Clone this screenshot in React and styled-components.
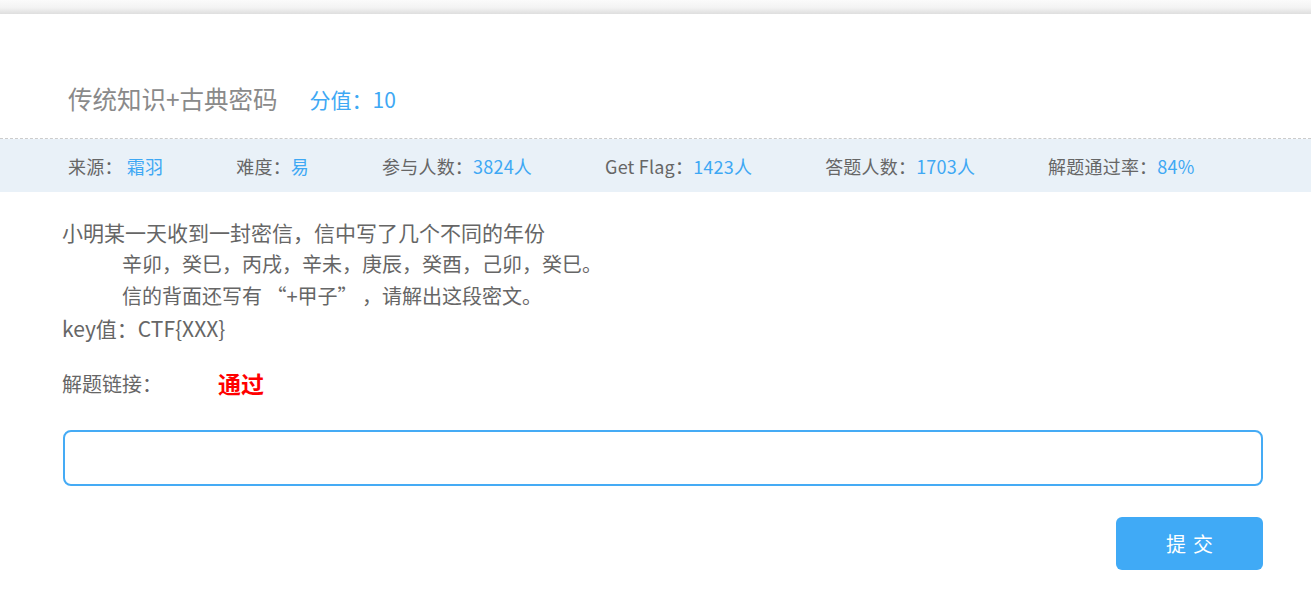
import React from "react";
import styled, { createGlobalStyle } from "styled-components";

const GlobalStyle = createGlobalStyle`
  html, body {
    margin: 0;
    padding: 0;
    background: #ffffff;
  }
  body {
    font-family: "Noto Sans CJK SC", "Noto Sans", sans-serif;
    color: #666666;
  }
`;

const stats = [
  { label: "来源：", value: "霜羽", space: true },
  { label: "难度：", value: "易" },
  { label: "参与人数：", value: "3824人" },
  { label: "Get Flag：", value: "1423人" },
  { label: "答题人数：", value: "1703人" },
  { label: "解题通过率：", value: "84%" },
];

const App = () => {
  return (
    <>
      <GlobalStyle />
      <Page>
        <TopShade />
        <Header>
          <Title>传统知识+古典密码</Title>
          <Score>分值：10</Score>
        </Header>
        <StatsBar>
          {stats.map((item) => (
            <Stat key={item.label}>
              {item.label}
              {item.space && " "}
              <Blue>{item.value}</Blue>
            </Stat>
          ))}
        </StatsBar>
        <Body>
          <Line size={21}>小明某一天收到一封密信，信中写了几个不同的年份</Line>
          <Line indent size={20}>
            辛卯，癸巳，丙戌，辛未，庚辰，癸酉，己卯，癸巳。
          </Line>
          <Line indent size={20}>
            信的背面还写有 “+甲子” ，请解出这段密文。
          </Line>
          <Line size={21}>key值：CTF{"{XXX}"}</Line>
          <LinkRow>
            <LinkLabel>解题链接：</LinkLabel>
            <Passed>通过</Passed>
          </LinkRow>
          <FlagInput type="text" />
          <Actions>
            <SubmitButton>提交</SubmitButton>
          </Actions>
        </Body>
      </Page>
    </>
  );
};

const Page = styled.div`
  width: 100%;
  min-height: 593px;
  background: #ffffff;
`;

const TopShade = styled.div`
  height: 14px;
  background: linear-gradient(#fbfbfb 0%, #f3f3f3 55%, #dedede 100%);
`;

const Header = styled.div`
  display: flex;
  align-items: center;
  gap: 32px;
  height: 30px;
  padding: 70px 68px 24px;
  border-bottom: 1px dashed #cccccc;
`;

const Title = styled.h2`
  margin: 0;
  font-size: 24.5px;
  font-weight: 400;
  line-height: 30px;
  color: #8a8a8a;
`;

const Score = styled.span`
  font-size: 21px;
  line-height: 30px;
  color: #3ea8f4;
`;

const StatsBar = styled.div`
  display: flex;
  align-items: center;
  gap: 73px;
  height: 53px;
  padding: 0 68px;
  background: #e9f1f8;
`;

const Stat = styled.div`
  font-size: 18px;
  letter-spacing: 0.2px;
  color: #666666;
  white-space: pre;
`;

const Blue = styled.span`
  color: #3ea8f4;
`;

const Body = styled.div`
  padding: 24px 48px 0 62px;
`;

const Line = styled.div`
  font-size: ${(p) => p.size}px;
  line-height: 32px;
  color: #666666;
  padding-left: ${(p) => (p.indent ? "60px" : "0")};
`;

const LinkRow = styled.div`
  display: flex;
  align-items: center;
  margin-top: 23px;
  height: 32px;
`;

const LinkLabel = styled.span`
  width: 156px;
  font-size: 20px;
  color: #666666;
`;

const Passed = styled.span`
  font-size: 23px;
  font-weight: 700;
  color: #ff0000;
`;

const FlagInput = styled.input`
  display: block;
  box-sizing: border-box;
  width: 1200px;
  height: 56px;
  margin: 31px 0 0 1px;
  padding: 0 16px;
  border: 2px solid #45abf5;
  border-radius: 8px;
  outline: none;
  font-family: inherit;
  font-size: 18px;
  background: #ffffff;
`;

const Actions = styled.div`
  display: flex;
  justify-content: flex-end;
  width: 1201px;
  margin-top: 31px;
`;

const SubmitButton = styled.button`
  width: 147px;
  height: 53px;
  padding: 0 0 0 7px;
  border: none;
  border-radius: 6px;
  background: #40aaf6;
  color: #ffffff;
  font-family: inherit;
  font-size: 20px;
  letter-spacing: 7px;
  cursor: pointer;
`;

export default App;
